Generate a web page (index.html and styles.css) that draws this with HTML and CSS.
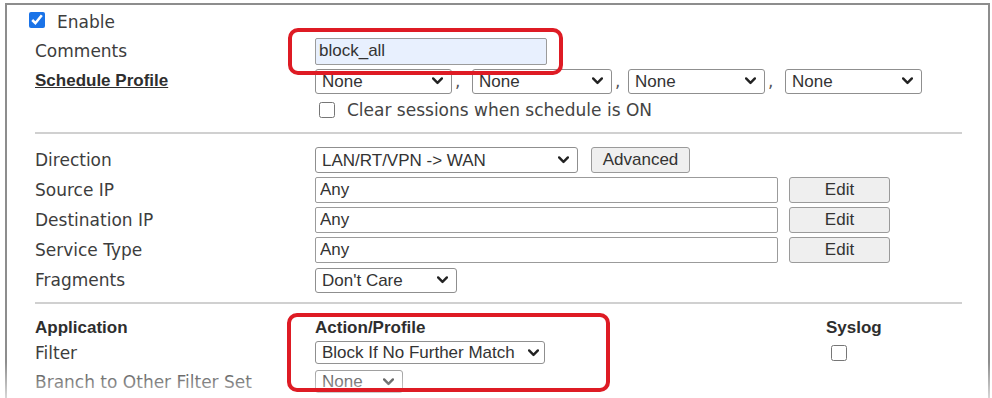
FILE: index.html
```html
<!DOCTYPE html>
<html lang="en">

<head>
    <meta charset="UTF-8">
    <title>Filter Rule</title>
    <link rel="stylesheet" href="styles.css">
</head>

<body>
    <div class="panel">
        <div class="row row-enable">
            <label class="check check-enable"><input type="checkbox" checked> Enable</label>
        </div>
        <div class="row row-comments">
            <span class="label">Comments</span>
            <div><input class="text comment-input" type="text" value="block_all"></div>
        </div>
        <div class="row row-schedule">
            <span class="label bold link">Schedule Profile</span>
            <div class="schedules">
                <span class="pick sched"><select class="sel"><option>None</option></select><svg class="chev" viewBox="0 0 10 7"><path d="M1 1.2 5 5.2 9 1.2"/></svg></span><span class="comma">,</span>
                <span class="pick sched sched-wide"><select class="sel"><option>None</option></select><svg class="chev" viewBox="0 0 10 7"><path d="M1 1.2 5 5.2 9 1.2"/></svg></span><span class="comma comma-short">,</span>
                <span class="pick sched"><select class="sel"><option>None</option></select><svg class="chev" viewBox="0 0 10 7"><path d="M1 1.2 5 5.2 9 1.2"/></svg></span><span class="comma">,</span>
                <span class="pick sched"><select class="sel"><option>None</option></select><svg class="chev" viewBox="0 0 10 7"><path d="M1 1.2 5 5.2 9 1.2"/></svg></span>
            </div>
        </div>
        <div class="row row-clear">
            <span></span>
            <label class="check check-clear"><input type="checkbox"> Clear sessions when schedule is ON</label>
        </div>

        <hr class="sep">

        <div class="row field-row first">
            <span class="label">Direction</span>
            <div class="controls">
                <span class="pick direction"><select class="sel"><option>LAN/RT/VPN -&gt; WAN</option></select><svg class="chev" viewBox="0 0 10 7"><path d="M1 1.2 5 5.2 9 1.2"/></svg></span>
                <button class="btn advanced">Advanced</button>
            </div>
        </div>
        <div class="row field-row">
            <span class="label">Source IP</span>
            <div class="controls">
                <input class="text wide" type="text" value="Any">
                <button class="btn edit">Edit</button>
            </div>
        </div>
        <div class="row field-row">
            <span class="label">Destination IP</span>
            <div class="controls">
                <input class="text wide" type="text" value="Any">
                <button class="btn edit">Edit</button>
            </div>
        </div>
        <div class="row field-row">
            <span class="label">Service Type</span>
            <div class="controls">
                <input class="text wide" type="text" value="Any">
                <button class="btn edit">Edit</button>
            </div>
        </div>
        <div class="row field-row">
            <span class="label">Fragments</span>
            <div class="controls">
                <span class="pick fragments"><select class="sel"><option>Don't Care</option></select><svg class="chev" viewBox="0 0 10 7"><path d="M1 1.2 5 5.2 9 1.2"/></svg></span>
            </div>
        </div>

        <hr class="sep sep-app">

        <div class="row app-head">
            <span class="label bold">Application</span>
            <span class="label bold">Action/Profile</span>
            <span class="label bold">Syslog</span>
        </div>
        <div class="row app-row">
            <span class="label">Filter</span>
            <div><span class="pick small action"><select class="sel"><option>Block If No Further Match</option></select><svg class="chev" viewBox="0 0 10 7"><path d="M1 1.2 5 5.2 9 1.2"/></svg></span></div>
            <div><input class="syslog-check" type="checkbox"></div>
        </div>
        <div class="row app-row branch">
            <span class="label">Branch to Other Filter Set</span>
            <div><span class="pick small branch-sel"><select class="sel"><option>None</option></select><svg class="chev" viewBox="0 0 10 7"><path d="M1 1.2 5 5.2 9 1.2"/></svg></span></div>
            <div></div>
        </div>
    </div>

    <!-- annotations -->
    <div class="fade"></div>
    <div class="note note-comments"></div>
    <div class="note note-action"></div>
</body>

</html>
```

FILE: styles.css
```css
* {
    box-sizing: border-box;
}

body {
    margin: 0;
    position: relative;
    width: 992px;
    height: 398px;
    overflow: hidden;
    background: #fff;
    font-family: "DejaVu Sans", Verdana, sans-serif;
    font-size: 17px;
    color: #3d3d3d;
}

.panel {
    margin: 3px 2px 0 5px;
    height: 395px;
    overflow: hidden;
    padding: 7px 26px 0 28px;
    border: 2px solid #8d8d8d;
    border-bottom: none;
}

.row {
    display: grid;
    grid-template-columns: 280px 1fr;
    align-items: center;
}

.label {
    line-height: 20px;
    white-space: nowrap;
}

.bold {
    font-family: "Liberation Sans", Arial, sans-serif;
    font-weight: bold;
    color: #2e2e2e;
}

.link {
    text-decoration: underline;
}

.check {
    display: flex;
    align-items: center;
    gap: 12px;
    line-height: 20px;
}

.check input,
.syslog-check {
    width: 16px;
    height: 16px;
    margin: 0;
    accent-color: #1a73e8;
}

.row-enable {
    height: 20px;
}

.check-enable {
    margin-left: -6px;
}

.check-enable input {
    margin-top: -5px;
}

.row-comments {
    margin-top: 5px;
    height: 28px;
}

.text,
.sel,
.btn {
    font-family: "Liberation Sans", Arial, sans-serif;
    font-size: 17px;
    color: #333;
}

.text {
    height: 26px;
    padding: 0 4px;
    border: 1px solid #9b9b9b;
    border-radius: 2px;
    background: #fff;
    outline: none;
}

.comment-input {
    width: 232px;
    height: 27px;
    padding: 0 3px;
    background: #e8f0fe;
}

/* select with drawn chevron */
.pick {
    position: relative;
    display: inline-block;
    height: 25px;
}

.sel {
    appearance: none;
    width: 100%;
    height: 100%;
    padding: 0 24px 0 6px;
    border: 1px solid #8f8f8f;
    border-radius: 3px;
    background: #fff;
}

.chev {
    position: absolute;
    right: 9px;
    top: 50%;
    width: 11px;
    height: 8px;
    margin-top: -4px;
    pointer-events: none;
}

.chev path {
    fill: none;
    stroke: #222;
    stroke-width: 2.2;
    stroke-linecap: round;
    stroke-linejoin: round;
}

.row-schedule {
    margin-top: 3px;
    height: 26px;
}

.schedules {
    display: flex;
    align-items: center;
}

.sched {
    width: 137px;
}

.sched-wide {
    width: 140px;
}

.comma {
    width: 20px;
    padding-left: 3px;
    line-height: 20px;
    color: #555;
}

.comma-short {
    width: 16px;
}

.row-clear {
    margin-top: 6px;
    height: 20px;
}

.check-clear {
    margin-left: 4px;
    color: #444;
}

.check-clear input {
    accent-color: #888;
}

.sep {
    margin: 12px 0 0;
    height: 0;
    border: 0;
    border-top: 2px solid #d0d0d0;
}

.field-row {
    height: 26px;
    margin-top: 4px;
}

.field-row.first {
    margin-top: 13px;
}

.controls {
    display: flex;
    align-items: center;
}

.direction {
    width: 263px;
    height: 26px;
}

.btn {
    height: 26px;
    padding: 0;
    border: 1px solid #9a9a9a;
    border-radius: 3px;
    background: #efefef;
}

.advanced {
    width: 99px;
    margin-left: 13px;
}

.wide {
    width: 463px;
}

.edit {
    width: 101px;
    margin-left: 11px;
}

.fragments {
    width: 142px;
}

.sep-app {
    margin-top: 9px;
}

.app-head,
.app-row {
    grid-template-columns: 280px 511px 1fr;
}

.app-head {
    margin-top: 14px;
    height: 20px;
}

.app-row {
    margin-top: 3px;
    height: 23px;
}

.app-row.branch {
    margin-top: 6px;
}

.pick.small {
    height: 23px;
    vertical-align: middle;
}

.action {
    width: 230px;
}

.action .chev {
    right: 6px;
}

.branch-sel {
    width: 88px;
}

.syslog-check {
    display: block;
    margin-left: 5px;
    accent-color: #888;
}

.fade {
    position: absolute;
    left: 0;
    right: 0;
    top: 362px;
    height: 36px;
    background: linear-gradient(rgba(255, 255, 255, 0), rgba(255, 255, 255, 0.65));
}

.note {
    position: absolute;
    z-index: 2;
    border: 4px solid #de1b24;
    border-radius: 10px;
}

.note-comments {
    left: 288px;
    top: 28px;
    width: 275px;
    height: 47px;
}

.note-action {
    left: 287px;
    top: 313px;
    width: 323px;
    height: 79px;
}
```
